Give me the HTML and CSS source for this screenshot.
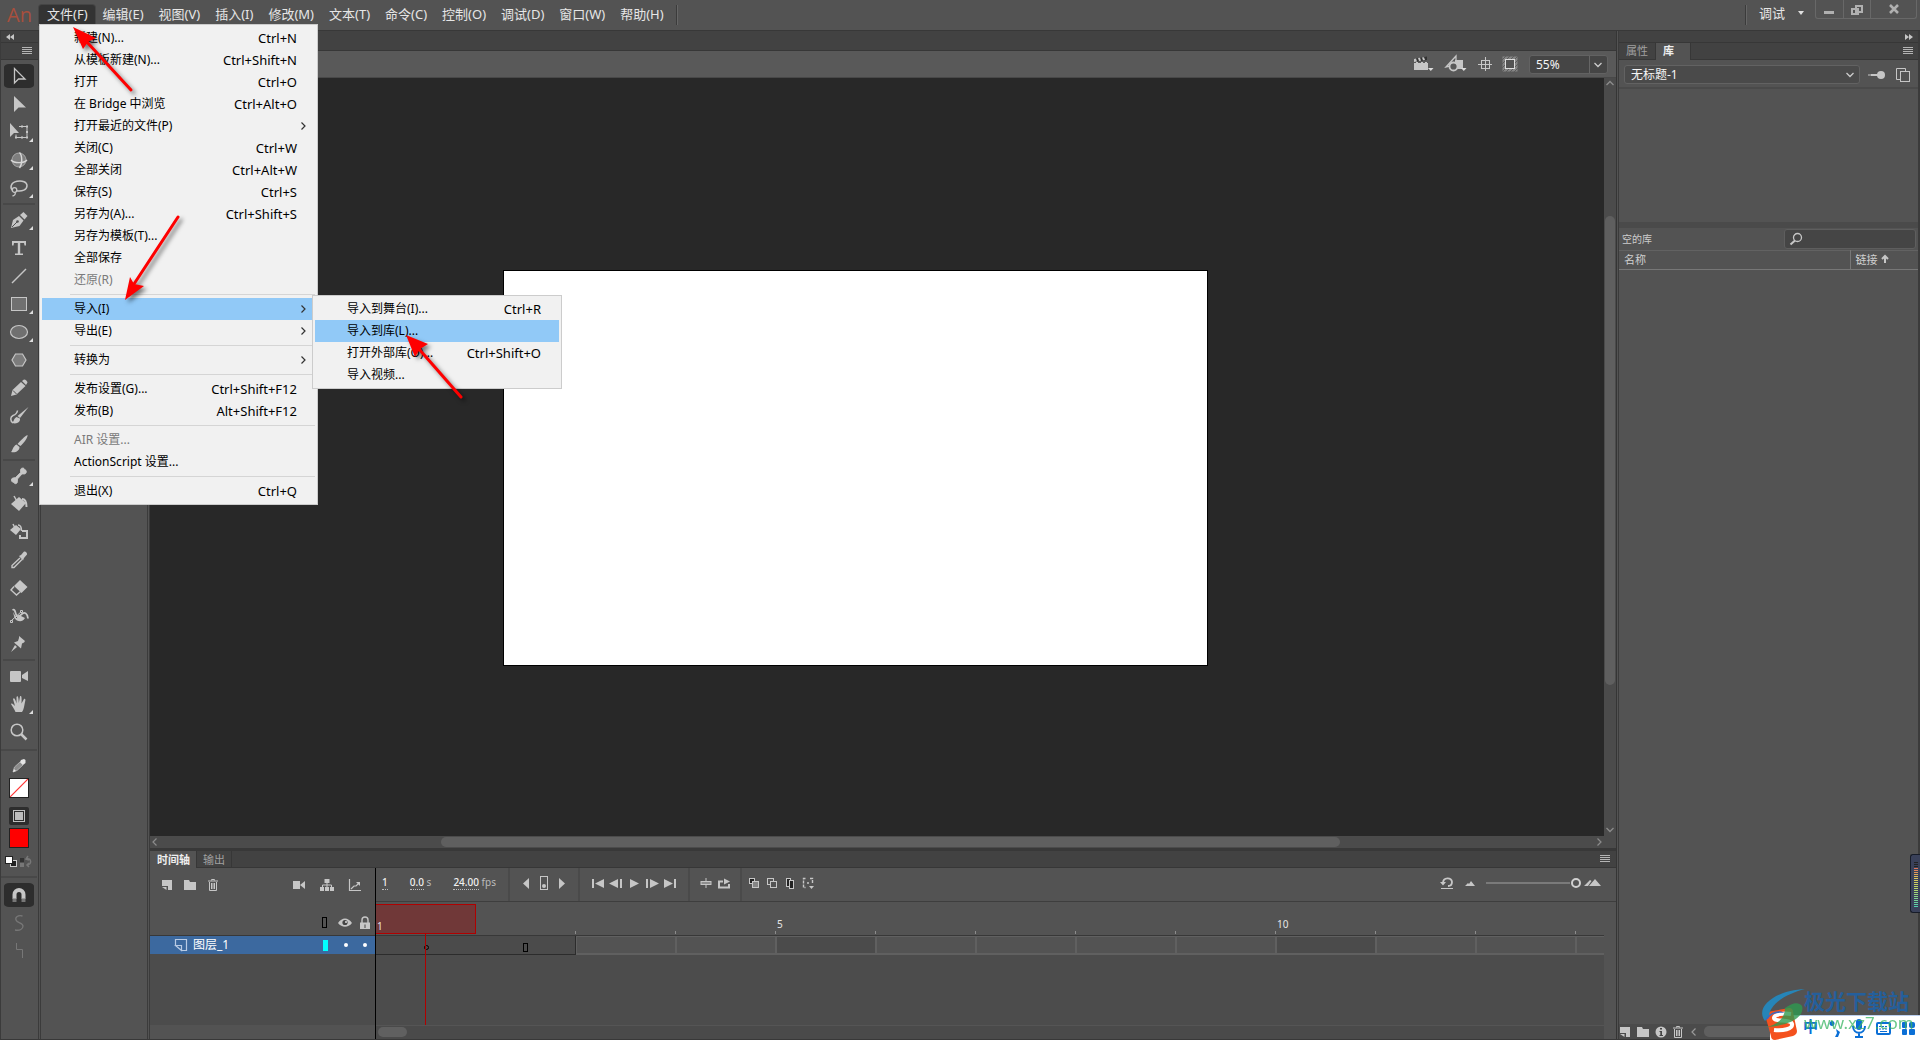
FILE: index.html
```html
<!DOCTYPE html>
<html lang="zh-CN">
<head>
<meta charset="utf-8">
<title>An</title>
<link rel="stylesheet" href="styles.css">
</head>
<body>
<svg class="sprite" aria-hidden="true">
  <symbol id="i-burger" viewBox="0 0 12 10"><path d="M1 1.5h10M1 3.5h10M1 5.500h10M1 7.500h10" stroke="#b4b4b4" fill="none"/></symbol>
  <symbol id="i-caret" viewBox="0 0 10 10"><path d="M1.500 3l3.500 3.500L8.500 3" fill="none" stroke="currentColor" stroke-width="1.300"/></symbol>
  <symbol id="i-sub" viewBox="0 0 10 10"><path d="M3.500 1.500L7 5 3.500 8.500" fill="none" stroke="currentColor" stroke-width="1.200"/></symbol>
  <symbol id="i-select" viewBox="0 0 24 24"><path d="M7.500 4.500v14.500l4-4h6.500z" fill="none" stroke="#c6c6c6" stroke-width="1.300"/></symbol>
  <symbol id="i-subselect" viewBox="0 0 24 24"><path d="M7 4v16l4.500-4.500H19z" fill="#c6c6c6"/></symbol>
  <symbol id="i-transform" viewBox="0 0 24 24"><path d="M3 3v14l4-4h5z" fill="#c6c6c6"/><path d="M12 6.500h8v11H9v-3" fill="none" stroke="#c6c6c6"/><path d="M14 5.500h2v2h-2zM19 5.500h2v2h-2zM19 11h2v2h-2zM19 16.500h2v2h-2zM14 16.500h2v2h-2zM8 16.500h2v2H8z" fill="#c6c6c6"/></symbol>
  <symbol id="i-sphere" viewBox="0 0 24 24"><circle cx="12" cy="12" r="7" fill="#7e7e7e"/><circle cx="12" cy="12" r="7" fill="none" stroke="#a8a8a8"/><path d="M4 12c3 3.500 13 3.500 16 0" fill="none" stroke="#d8d8d8" stroke-width="1.400"/><path d="M12.500 4.500c3 3 3 12 0 15.500" fill="none" stroke="#d8d8d8" stroke-width="1.400"/></symbol>
  <symbol id="i-lasso" viewBox="0 0 24 24"><path d="M6 14.500C2.500 12 3.500 6.500 10 5.200c5.500-1 10 .8 10 4.500 0 4-5 6-10.500 5" fill="none" stroke="#c6c6c6" stroke-width="1.500"/><circle cx="7.500" cy="14" r="2.300" fill="none" stroke="#c6c6c6" stroke-width="1.300"/><path d="M8 16c1 2-.5 3.500-2.500 4" fill="none" stroke="#c6c6c6" stroke-width="1.300"/></symbol>
  <symbol id="i-pen" viewBox="0 0 24 24"><path d="M4 20l2-8 6-4 4.500 4.500-4 5.500z" fill="#c6c6c6"/><path d="M5 19l5-5" stroke="#535353"/><circle cx="10.500" cy="13.500" r="1.300" fill="#535353"/><path d="M13 7l3.500-3 4 4-3 3.500z" fill="#c6c6c6"/></symbol>
  <symbol id="i-text" viewBox="0 0 24 24"><path d="M5 5h14v4.500h-1.500L17 7h-3.800v10.500h2.800V19H8v-1.500h2.800V7H7l-.5 2.500H5z" fill="#c6c6c6"/></symbol>
  <symbol id="i-line" viewBox="0 0 24 24"><path d="M5 19L19 5" stroke="#c6c6c6" stroke-width="1.500"/></symbol>
  <symbol id="i-rect" viewBox="0 0 24 24"><rect x="4.500" y="5.500" width="15" height="13" fill="#707070" stroke="#c6c6c6"/></symbol>
  <symbol id="i-ellipse" viewBox="0 0 24 24"><ellipse cx="12" cy="12" rx="8.500" ry="6.500" fill="#707070" stroke="#c6c6c6" stroke-width="1.200"/></symbol>
  <symbol id="i-hex" viewBox="0 0 24 24"><path d="M8.500 6h7l3.500 6-3.500 6h-7L5 12z" fill="#7c7c7c" stroke="#c6c6c6" stroke-width="1.200"/></symbol>
  <symbol id="i-pencil" viewBox="0 0 24 24"><path d="M4 20l1.500-6L14 6l4.500 4-9 8.500z" fill="#c6c6c6"/><path d="M6 14.500l3.500 3.500" stroke="#535353"/><path d="M15 5l2-1.500c2 0 3 1.500 3.500 3L19 9z" fill="#c6c6c6"/></symbol>
  <symbol id="i-brush2" viewBox="0 0 24 24"><path d="M6 19c-3-2-3-6 0-7.500 3-1 4-2 4.500-5" fill="none" stroke="#c6c6c6" stroke-width="1.500"/><path d="M21.500 3L13 14l-2.500-2z" fill="#c6c6c6"/><path d="M13 14.500c.5 3.500-3 6-8 4.500 2-1 1.500-4.500 4.500-6z" fill="#c6c6c6"/></symbol>
  <symbol id="i-brush" viewBox="0 0 24 24"><path d="M20.500 3c.5 2-3 7.500-7 11L10.500 12C14 8 18 4 20.500 3z" fill="#c6c6c6"/><path d="M12.500 15c0 4-4 6-8.500 5 1.500-1 1.500-5.500 5.500-7.500z" fill="#c6c6c6"/></symbol>
  <symbol id="i-bone" viewBox="0 0 24 24"><path d="M8.500 13.500l5-5V6c0-2 3.500-3 4-.5 2.500.5 2.500 4 0 4.500H15l-4.500 5v2.500c0 2.500-3 3-3.500 1-3 0-3.500-4-1-4.500z" fill="#c6c6c6" stroke="#c6c6c6" stroke-width=".8"/></symbol>
  <symbol id="i-bucket" viewBox="0 0 24 24"><path d="M4 12l8-7 7 6-7 8z" fill="#c6c6c6"/><path d="M7 4l4 7" stroke="#c6c6c6" stroke-width="1.500"/><path d="M15 7c3 0 4.500 2 4.500 8" stroke="#c6c6c6" stroke-width="2" fill="none"/></symbol>
  <symbol id="i-ink" viewBox="0 0 24 24"><path d="M3 10l6-5 5 4-5 6z" fill="#c6c6c6"/><path d="M6 4l2 4M11 5c3 0 3.500 2 3.500 6" stroke="#c6c6c6" stroke-width="1.500" fill="none"/><path d="M15 11h5v7h-7v-3" fill="none" stroke="#c6c6c6" stroke-width="2"/></symbol>
  <symbol id="i-dropper" viewBox="0 0 24 24"><path d="M13 10l-8 7.500v2h2l8-8" fill="none" stroke="#c6c6c6" stroke-width="1.400"/><path d="M12 8l2-1 3-3.500c1.500-.5 3.500 1 3 3L17 10l-1 2.500z" fill="#c6c6c6"/></symbol>
  <symbol id="i-eraser" viewBox="0 0 24 24"><path d="M13 4l7.500 7-6 6-7.500-7z" fill="#c6c6c6"/><path d="M7 10.500l-3 3.500 5.500 5 4-3.500" fill="none" stroke="#c6c6c6" stroke-width="1.400"/></symbol>
  <symbol id="i-width" viewBox="0 0 24 24"><path d="M5 16l10-9" stroke="#c6c6c6" fill="none"/><path d="M5.500 6c3-1.500 2.500 3 4 5.500 1.500 2 4-.5 6-2s5-.5 5.500 5" fill="none" stroke="#c6c6c6" stroke-width="1.800"/><path d="M6 8c1 3 1 7 4 8.500s6 1 8-2.500l-6-3-3 2z" fill="#c6c6c6"/><path d="M3.500 16.500h2v2h-2zM13.500 6.500h2v2h-2zM8.500 12.500h2v2h-2z" fill="#535353" stroke="#c6c6c6"/></symbol>
  <symbol id="i-pin" viewBox="0 0 24 24"><path d="M12 4l6 5-1 1.500-2 1-1 5-7-6 4-1.500 1-3zM8 13l2 2-6 5z" fill="#c6c6c6"/></symbol>
  <symbol id="i-cam" viewBox="0 0 24 24"><rect x="3" y="7" width="11" height="11" rx="1" fill="#c6c6c6"/><path d="M15 11l6-4v10l-6-3z" fill="#c6c6c6"/></symbol>
  <symbol id="i-hand" viewBox="0 0 24 24"><path d="M8.500 20c-1-3-3-5-4.500-8 1-1 2 0 4 2L6 7c1-1.500 2-.5 3.500 4.500L9.500 5c1-1.500 2-1 2.300 6L13 4.500c1-1 2-.5 1.500 7L17 7c1-.5 2 0 1 3-1 5-1 7-3 10z" fill="#c6c6c6"/></symbol>
  <symbol id="i-zoom" viewBox="0 0 24 24"><circle cx="10" cy="10" r="5.800" fill="none" stroke="#c6c6c6" stroke-width="1.500"/><path d="M14 14l5.500 5.500" stroke="#c6c6c6" stroke-width="2.500"/></symbol>
  <symbol id="i-magnet" viewBox="0 0 24 24"><path d="M7.500 16v-4.500c0-6 9-6 9 0V16" fill="none" stroke="#c6c6c6" stroke-width="4"/><path d="M5.500 15.500h4V19h-4zM14.500 15.500h4V19h-4z" fill="#777"/></symbol>
  <symbol id="i-smooth" viewBox="0 0 24 24"><path d="M15.500 5C11 4 8 6 9 9s7 3 7 6-3 5-8 4" fill="none" stroke="#777" stroke-width="1.300"/></symbol>
  <symbol id="i-straight" viewBox="0 0 24 24"><path d="M9.500 4v6.500h6V19" fill="none" stroke="#777"/></symbol>
  <symbol id="i-stroke" viewBox="0 0 24 24"><path d="M6 18l1.500-5L13 8l3 3-6 5.500z" fill="#8c8c8c" stroke="#bbb" stroke-width=".8"/><path d="M6 18l1-3 2 2zM14 6l3-1 1.500 1v3L16 11l-3-3z" fill="#e4e4e4"/></symbol>
  <symbol id="i-swap" viewBox="0 0 28 14"><rect x="5.500" y="5.500" width="6" height="6" fill="#222" stroke="#ccc"/><rect x=".5" y="1.500" width="7" height="7" fill="#fff" stroke="#222"/><path d="M15 3h4v4h-4z" fill="#333"/><path d="M15 8h4v4h-4z" fill="#777"/><path d="M21 4c6-2 6 6 1 6M23 1l-2 3 3 1M24 8l-2 2 2 2" fill="none" stroke="#777" stroke-width="1.500"/></symbol>
  <symbol id="i-objdraw" viewBox="0 0 20 18"><rect x="4.500" y="3.500" width="11" height="11" fill="none" stroke="#bdbdbd"/><rect x="6" y="5" width="8" height="8" fill="#bdbdbd"/></symbol>
  <symbol id="i-clapper" viewBox="0 0 24 20"><path d="M3 9h14v7H3zM20 13h-1l-.5 0z" fill="#c6c6c6"/><path d="M3 8l13-2V2.500L3 5z" fill="#333"/><path d="M3 5l2-.5 1 3-3 .5M7 4l2-.3 1 3-2 .3M11 3.500l2-.3 1 2.800-2 .3M5 8h2v1H5M10 8h2v1h-2M14 8h2v1h-2" fill="#c6c6c6"/><path d="M17 14h5.500l-2.700 3z" fill="#ddd"/></symbol>
  <symbol id="i-shapes" viewBox="0 0 24 20"><path d="M2 13L12 2v9z" fill="none" stroke="#c6c6c6" stroke-width="1.300"/><path d="M11 6h8v9h-8z" fill="#c6c6c6"/><circle cx="9.500" cy="12.500" r="4" fill="#595959" stroke="#c6c6c6" stroke-width="1.800"/><path d="M17 14h5.500l-2.700 3z" fill="#ddd"/></symbol>
  <symbol id="i-center" viewBox="0 0 16 16"><path d="M8.500 1v14M1 8.500h14" stroke="#c6c6c6"/><rect x="4.500" y="4.500" width="8" height="8" fill="none" stroke="#c6c6c6"/></symbol>
  <symbol id="i-clip" viewBox="0 0 16 16"><rect x=".5" y=".5" width="15" height="15" fill="#858585"/><path d="M0 4l4-4M0 8l8-8M0 12L12 0M0 16L16 0M4 16L16 4M8 16l8-8M12 16l4-4" stroke="#5c5c5c"/><rect x="3.500" y="3.500" width="9" height="9" fill="#535353" stroke="#ddd"/></symbol>
  <symbol id="i-newlayer" viewBox="0 0 12 12"><path d="M1 1h10v10H7V7H1z" fill="#c6c6c6"/><path d="M1 8h4.500v3z" fill="#c6c6c6"/></symbol>
  <symbol id="i-folder" viewBox="0 0 14 12"><path d="M1 1h5l1 2h6v8H1z" fill="#c6c6c6"/></symbol>
  <symbol id="i-trash" viewBox="0 0 12 14"><path d="M1 3h10M4.500 2.500v-1h3v1M2.500 4v8.500h7V4M4.500 5v6M6 5v6M7.500 5v6" fill="none" stroke="#c6c6c6"/></symbol>
  <symbol id="i-tree" viewBox="0 0 14 14"><path d="M4.500 1h5v4h-5zM0 9h4v4H0zM5 9h4v4H5zM10 9h4v4h-4z" fill="#c6c6c6"/><path d="M7 5v4M2.500 9V7h9v2" fill="none" stroke="#c6c6c6"/></symbol>
  <symbol id="i-graph" viewBox="0 0 14 14"><path d="M1.500 1v11.500H13M3 11l3-3h2l3-3" fill="none" stroke="#c6c6c6" stroke-width="1.200"/><path d="M8 4h4v4z" fill="#c6c6c6"/></symbol>
  <symbol id="i-tcam" viewBox="0 0 14 12"><path d="M1 2h7v8H1zM8 6l5-4v8z" fill="#c6c6c6"/></symbol>
  <symbol id="i-left" viewBox="0 0 14 14"><path d="M10 2v11L4 7.500z" fill="#c6c6c6"/></symbol>
  <symbol id="i-right" viewBox="0 0 14 14"><path d="M4 2v11l6-5.500z" fill="#c6c6c6"/></symbol>
  <symbol id="i-key" viewBox="0 0 14 14"><rect x="3.500" y=".5" width="7" height="13" fill="none" stroke="#c6c6c6"/><circle cx="7" cy="10" r="2" fill="#c6c6c6"/></symbol>
  <symbol id="i-first" viewBox="0 0 14 14"><path d="M1 3h2v9H1zM13 3v9L4 7.500z" fill="#c6c6c6"/></symbol>
  <symbol id="i-prev" viewBox="0 0 14 14"><path d="M11 3h2v9h-2zM9 3v9L0 7.500z" fill="#c6c6c6"/></symbol>
  <symbol id="i-play" viewBox="0 0 14 14"><path d="M3 3v9l9-4.500z" fill="#c6c6c6"/></symbol>
  <symbol id="i-next" viewBox="0 0 14 14"><path d="M1 3h2v9H1zM5 3v9l9-4.500z" fill="#c6c6c6"/></symbol>
  <symbol id="i-last" viewBox="0 0 14 14"><path d="M11 3h2v9h-2zM1 3v9l9-4.500z" fill="#c6c6c6"/></symbol>
  <symbol id="i-cframe" viewBox="0 0 14 14"><path d="M7 2v10" stroke="#c6c6c6"/><rect x="2" y="5.500" width="10" height="3" fill="#8e8e8e" stroke="#c6c6c6"/></symbol>
  <symbol id="i-loop" viewBox="0 0 14 14"><path d="M6 5.500H2v6h10V8" fill="none" stroke="#c6c6c6" stroke-width="2"/><path d="M7 2.500l6 3-6 3z" fill="#c6c6c6"/></symbol>
  <symbol id="i-onion" viewBox="0 0 14 14"><rect x="2.500" y="2.500" width="5" height="5" fill="#222" stroke="#c6c6c6"/><rect x="5.500" y="5.500" width="6" height="6" fill="#858585" stroke="#c6c6c6"/></symbol>
  <symbol id="i-onion2" viewBox="0 0 14 14"><rect x="2.500" y="2.500" width="6" height="6" fill="none" stroke="#c6c6c6"/><rect x="5.500" y="5.500" width="6" height="6" fill="#535353" stroke="#c6c6c6"/></symbol>
  <symbol id="i-multi" viewBox="0 0 14 14"><rect x="3.500" y="2.500" width="4" height="8" fill="#222" stroke="#c6c6c6"/><rect x="6.500" y="4.500" width="4" height="8" fill="#222" stroke="#c6c6c6"/></symbol>
  <symbol id="i-marks" viewBox="0 0 14 14"><path d="M4.500 2.500h-2v9h2M9 2.500h2.500V8M6 7h2" fill="none" stroke="#c6c6c6" stroke-width="1.400" stroke-dasharray="3 1"/><path d="M8 10h5l-2.500 3z" fill="#c6c6c6"/></symbol>
  <symbol id="i-undo" viewBox="0 0 14 14"><path d="M3 7c0-6 9-6 9-1 0 3-2 4-4 4" fill="none" stroke="#c6c6c6" stroke-width="1.800"/><path d="M0 6h6L3 9.500zM1 12h12v1H1z" fill="#c6c6c6"/></symbol>
  <symbol id="i-mtn" viewBox="0 0 18 10"><path d="M4 8l3-3 1 1 2-3 4 5z" fill="#c6c6c6"/></symbol>
  <symbol id="i-mtns" viewBox="0 0 18 10"><path d="M0 8l6-6 1.500 1L4 8zM5 8l6-7 6 7z" fill="#c6c6c6"/></symbol>
  <symbol id="i-eye" viewBox="0 0 14 12"><path d="M0 6c4-6 10-6 14 0-4 5-10 5-14 0z" fill="#c6c6c6"/><circle cx="7" cy="5.500" r="2.600" fill="#444"/><circle cx="8" cy="5" r="1" fill="#ddd"/></symbol>
  <symbol id="i-lock" viewBox="0 0 12 14"><path d="M3 7V4c0-4 6-4 6 0v3" fill="none" stroke="#c6c6c6" stroke-width="1.400"/><path d="M1 6.500h10V13H1z" fill="#c6c6c6"/><path d="M5.500 8.500h1V12h-1z" fill="#444"/></symbol>
  <symbol id="i-layer" viewBox="0 0 14 14"><path d="M1.500 7.500v-6h11v11H8M1.500 7.500H7.500v5zM1.500 7.500l6 5" fill="none" stroke="#b9cbe4" stroke-width="1.200"/></symbol>
  <symbol id="i-pinned" viewBox="0 0 18 10"><path d="M0 4.500h9v1H0zM3 4h7v2H3z" fill="#c6c6c6"/><circle cx="13" cy="5" r="4" fill="#c6c6c6"/></symbol>
  <symbol id="i-copy" viewBox="0 0 16 16"><path d="M5 12.500H1.500v-11h9V4" fill="none" stroke="#c6c6c6"/><rect x="5.500" y="4.500" width="9" height="10" fill="none" stroke="#c6c6c6"/></symbol>
  <symbol id="i-search" viewBox="0 0 14 14"><circle cx="8.500" cy="5.500" r="4" fill="none" stroke="#c6c6c6" stroke-width="1.300"/><path d="M6 8.500l-4.500 4" stroke="#c6c6c6" stroke-width="2"/></symbol>
  <symbol id="i-info" viewBox="0 0 12 12"><circle cx="6" cy="6" r="5.500" fill="#c6c6c6"/><path d="M5 2h2v1.500H5zM4.500 5H7v4h1v1H4.500V9h.8V6h-.8z" fill="#444"/></symbol>
  <symbol id="i-up" viewBox="0 0 10 10"><path d="M5 9V2M2 5l3-3 3 3" fill="none" stroke="#c6c6c6" stroke-width="2"/></symbol>
</svg>

<div class="app">
  <header class="menubar">
    <span class="logo">An</span>
    <nav class="menus">
      <button class="menu-btn is-open">文件(F)</button>
      <button class="menu-btn">编辑(E)</button>
      <button class="menu-btn">视图(V)</button>
      <button class="menu-btn">插入(I)</button>
      <button class="menu-btn">修改(M)</button>
      <button class="menu-btn">文本(T)</button>
      <button class="menu-btn">命令(C)</button>
      <button class="menu-btn">控制(O)</button>
      <button class="menu-btn">调试(D)</button>
      <button class="menu-btn">窗口(W)</button>
      <button class="menu-btn">帮助(H)</button>
    </nav>
    <span class="bar-rule"></span>
    <span class="grow"></span>
    <span class="bar-rule"></span>
    <button class="workspace">调试 <svg width="8" height="6" viewBox="0 0 8 6"><path d="M1 1h6L4 5z" fill="#e0e0e0"/></svg></button>
    <div class="win">
      <button aria-label="最小化"><svg width="27" height="18" viewBox="0 0 27 18"><path d="M8 11h10v3H8z" fill="#b0b0b0"/></svg></button>
      <button aria-label="还原"><svg width="26" height="18" viewBox="0 0 26 18"><path d="M12 6h6v6h-6zM8 9h6v5H8z" fill="#535353" stroke="#b0b0b0" stroke-width="2"/></svg></button>
      <button class="close" aria-label="关闭"><svg width="45" height="18" viewBox="0 0 45 18"><path d="M19 5l8 8M27 5l-8 8" stroke="#b0b0b0" stroke-width="2.500"/></svg></button>
    </div>
  </header>

  <div class="work">
    <aside class="tools">
      <div class="strip"><svg width="8" height="6" viewBox="0 0 8 6"><path d="M4 0v6L0 3zM8 0v6L4 3z" fill="#c6c6c6"/></svg></div>
      <div class="strip tall"><svg width="12" height="10"><use href="#i-burger"/></svg></div>
      <div class="tool-list">
        <button class="tool active"><svg><use href="#i-select"/></svg></button>
        <button class="tool"><svg><use href="#i-subselect"/></svg></button>
        <button class="tool more"><svg><use href="#i-transform"/></svg></button>
        <button class="tool more"><svg><use href="#i-sphere"/></svg></button>
        <button class="tool more"><svg><use href="#i-lasso"/></svg></button>
        <hr>
        <button class="tool more"><svg><use href="#i-pen"/></svg></button>
        <button class="tool"><svg><use href="#i-text"/></svg></button>
        <button class="tool"><svg><use href="#i-line"/></svg></button>
        <button class="tool more"><svg><use href="#i-rect"/></svg></button>
        <button class="tool more"><svg><use href="#i-ellipse"/></svg></button>
        <button class="tool"><svg><use href="#i-hex"/></svg></button>
        <button class="tool"><svg><use href="#i-pencil"/></svg></button>
        <button class="tool"><svg><use href="#i-brush2"/></svg></button>
        <button class="tool"><svg><use href="#i-brush"/></svg></button>
        <hr>
        <button class="tool more"><svg><use href="#i-bone"/></svg></button>
        <button class="tool"><svg><use href="#i-bucket"/></svg></button>
        <button class="tool"><svg><use href="#i-ink"/></svg></button>
        <button class="tool"><svg><use href="#i-dropper"/></svg></button>
        <button class="tool"><svg><use href="#i-eraser"/></svg></button>
        <button class="tool"><svg><use href="#i-width"/></svg></button>
        <button class="tool"><svg><use href="#i-pin"/></svg></button>
        <hr>
        <button class="tool"><svg><use href="#i-cam"/></svg></button>
        <button class="tool more"><svg><use href="#i-hand"/></svg></button>
        <button class="tool"><svg><use href="#i-zoom"/></svg></button>
        <hr class="wide">
        <div class="colors">
          <svg width="24" height="24"><use href="#i-stroke"/></svg>
          <button class="swatch none" aria-label="笔触颜色"><svg width="18" height="18" viewBox="0 0 18 18"><path d="M0 18L18 0" stroke="#f33" stroke-width="1.200"/></svg></button>
          <button class="objdraw" aria-label="对象绘制"><svg width="20" height="18"><use href="#i-objdraw"/></svg></button>
          <button class="swatch fill" aria-label="填充颜色"></button>
          <svg class="swap" width="28" height="14"><use href="#i-swap"/></svg>
        </div>
        <hr class="wide">
        <button class="tool active"><svg><use href="#i-magnet"/></svg></button>
        <button class="tool"><svg><use href="#i-smooth"/></svg></button>
        <button class="tool"><svg><use href="#i-straight"/></svg></button>
      </div>
    </aside>
    <aside class="dock"></aside>

    <main class="center">
      <div class="doc-tabs"></div>
      <div class="edit-bar">
        <svg width="24" height="20"><use href="#i-clapper"/></svg>
        <svg width="24" height="20"><use href="#i-shapes"/></svg>
        <svg width="16" height="16"><use href="#i-center"/></svg>
        <svg width="16" height="16"><use href="#i-clip"/></svg>
        <div class="combo zoom"><select aria-label="缩放"><option>55%</option></select><svg width="10" height="10"><use href="#i-caret"/></svg></div>
      </div>
      <div class="canvas-row">
        <div class="canvas"><div class="stage"></div></div>
        <div class="vscroll">
          <svg class="flip" width="10" height="10"><use href="#i-caret"/></svg>
          <div class="vtrack"><span class="vthumb"></span></div>
          <svg width="10" height="10"><use href="#i-caret"/></svg>
        </div>
      </div>
      <div class="hscroll">
        <svg class="mirror" width="10" height="10"><use href="#i-sub"/></svg>
        <div class="htrack"><span class="hthumb"></span></div>
        <svg width="10" height="10"><use href="#i-sub"/></svg>
      </div>

      <section class="timeline">
        <div class="tabs">
          <button class="tab on">时间轴</button><button class="tab">输出</button>
          <span class="grow"></span><svg width="12" height="10"><use href="#i-burger"/></svg>
        </div>
        <div class="tl-body">
          <div class="layers">
            <div class="layer-tools">
              <svg width="12" height="12"><use href="#i-newlayer"/></svg>
              <svg width="14" height="12"><use href="#i-folder"/></svg>
              <svg width="12" height="14"><use href="#i-trash"/></svg>
              <span class="grow"></span>
              <svg width="14" height="12"><use href="#i-tcam"/></svg>
              <svg width="14" height="14"><use href="#i-tree"/></svg>
              <svg width="14" height="14"><use href="#i-graph"/></svg>
            </div>
            <div class="layer-head"><i class="outline"></i><svg width="14" height="12"><use href="#i-eye"/></svg><svg width="12" height="14"><use href="#i-lock"/></svg></div>
            <div class="layer"><svg width="14" height="14"><use href="#i-layer"/></svg><span>图层_1</span><span class="grow"></span><i class="chip"></i><i class="dot"></i><i class="dot"></i></div>
            <div class="layer-rest"></div>
            <div class="layer-foot"></div>
          </div>
          <div class="frames">
            <div class="play-bar">
              <div class="grp stats"><b>1</b><span><b>0.0</b> s</span><span><b>24.00</b> fps</span></div>
              <div class="grp"><svg><use href="#i-left"/></svg><svg><use href="#i-key"/></svg><svg><use href="#i-right"/></svg></div>
              <div class="grp transport"><svg><use href="#i-first"/></svg><svg><use href="#i-prev"/></svg><svg><use href="#i-play"/></svg><svg><use href="#i-next"/></svg><svg><use href="#i-last"/></svg></div>
              <div class="grp"><svg><use href="#i-cframe"/></svg><svg><use href="#i-loop"/></svg></div>
              <div class="grp last"><svg><use href="#i-onion"/></svg><svg><use href="#i-onion2"/></svg><svg><use href="#i-multi"/></svg><svg><use href="#i-marks"/></svg></div>
              <span class="grow"></span>
              <div class="sizer"><svg><use href="#i-undo"/></svg><svg class="m"><use href="#i-mtn"/></svg><input type="range" value="100" aria-label="帧大小"><svg class="m"><use href="#i-mtns"/></svg></div>
            </div>
            <div class="frame-area">
              <div class="ruler"><span></span><span></span><span></span><span></span><span>5</span><span></span><span></span><span></span><span></span><span>10</span><span></span><span></span><span></span></div>
              <div class="row"><span class="used"><i class="ring"></i></span><span class="used end"><i class="endmark"></i></span><span></span><span></span><span class="fifth"></span><span></span><span></span><span></span><span></span><span class="fifth"></span><span></span><span></span><span></span></div>
              <div class="frames-rest"></div>
              <div class="frames-scroll"><span></span></div>
              <div class="playhead">1</div>
              <div class="playline"></div>
            </div>
          </div>
        </div>
      </section>
    </main>

    <aside class="library">
      <div class="strip right"><svg width="8" height="6" viewBox="0 0 8 6"><path d="M0 0l4 3-4 3zM4 0l4 3-4 3z" fill="#c6c6c6"/></svg></div>
      <div class="tabs"><button class="tab">属性</button><button class="tab on">库</button><span class="grow"></span><svg width="12" height="10"><use href="#i-burger"/></svg></div>
      <div class="lib-doc">
        <div class="combo"><select aria-label="文档"><option>无标题-1</option></select><svg width="10" height="10"><use href="#i-caret"/></svg></div>
        <svg width="18" height="10"><use href="#i-pinned"/></svg>
        <svg width="16" height="16"><use href="#i-copy"/></svg>
      </div>
      <div class="preview"></div>
      <div class="lib-search"><label for="q">空的库</label><span class="field"><svg width="14" height="14"><use href="#i-search"/></svg><input id="q" type="text"></span></div>
      <table class="lib-table"><thead><tr><th>名称</th><th class="link">链接 <svg width="10" height="10"><use href="#i-up"/></svg></th></tr></thead></table>
      <div class="lib-space"></div>
      <div class="lib-foot">
        <svg width="12" height="12"><use href="#i-newlayer"/></svg>
        <svg width="14" height="12"><use href="#i-folder"/></svg>
        <svg width="12" height="12"><use href="#i-info"/></svg>
        <svg width="12" height="14"><use href="#i-trash"/></svg>
        <svg class="mirror" width="10" height="10"><use href="#i-sub"/></svg>
        <span class="foot-thumb"></span>
      </div>
    </aside>
  </div>

  <ul class="popup file-menu">
    <li><span>新建(N)...</span><kbd>Ctrl+N</kbd></li>
    <li><span>从模板新建(N)...</span><kbd>Ctrl+Shift+N</kbd></li>
    <li><span>打开</span><kbd>Ctrl+O</kbd></li>
    <li><span>在 Bridge 中浏览</span><kbd>Ctrl+Alt+O</kbd></li>
    <li><span>打开最近的文件(P)</span><svg><use href="#i-sub"/></svg></li>
    <li><span>关闭(C)</span><kbd>Ctrl+W</kbd></li>
    <li><span>全部关闭</span><kbd>Ctrl+Alt+W</kbd></li>
    <li><span>保存(S)</span><kbd>Ctrl+S</kbd></li>
    <li><span>另存为(A)...</span><kbd>Ctrl+Shift+S</kbd></li>
    <li><span>另存为模板(T)...</span></li>
    <li><span>全部保存</span></li>
    <li class="off"><span>还原(R)</span></li>
    <li class="sep"></li>
    <li class="hot"><span>导入(I)</span><svg><use href="#i-sub"/></svg></li>
    <li><span>导出(E)</span><svg><use href="#i-sub"/></svg></li>
    <li class="sep"></li>
    <li><span>转换为</span><svg><use href="#i-sub"/></svg></li>
    <li class="sep"></li>
    <li><span>发布设置(G)...</span><kbd>Ctrl+Shift+F12</kbd></li>
    <li><span>发布(B)</span><kbd>Alt+Shift+F12</kbd></li>
    <li class="sep"></li>
    <li class="off"><span>AIR 设置...</span></li>
    <li><span>ActionScript 设置...</span></li>
    <li class="sep"></li>
    <li><span>退出(X)</span><kbd>Ctrl+Q</kbd></li>
  </ul>
  <ul class="popup import-menu">
    <li><span>导入到舞台(I)...</span><kbd>Ctrl+R</kbd></li>
    <li class="hot"><span>导入到库(L)...</span></li>
    <li><span>打开外部库(O)...</span><kbd>Ctrl+Shift+O</kbd></li>
    <li><span>导入视频...</span></li>
  </ul>

  <svg class="arrows" width="480" height="410" viewBox="0 0 480 410">
    <g fill="#fe0000" stroke="#fe0000">
      <path d="M86 41L131 90" stroke-width="3" stroke-linecap="round"/><path d="M73 27l23 11-8 4-5 7z" stroke="none"/>
      <path d="M134 284L178 217" stroke-width="3" stroke-linecap="round"/><path d="M125 300l5-23 4 7 10 2z" stroke="none"/>
      <path d="M419 349L461 397" stroke-width="3" stroke-linecap="round"/><path d="M406 335l22 9-8 5-5 8z" stroke="none"/>
    </g>
  </svg>

  <div class="meter"><span></span></div>

  <div class="ime">
    <svg width="150" height="25" viewBox="0 0 150 25" fill="#0b6fd6">
      <path d="M66 13l4 3-2 5-3 0 2-4zM62 5a2.500 2.500 0 1 0 .1 0z"/>
      <rect x="86" y="3" width="6" height="11" rx="3"/><path d="M83 10c0 9 12 9 12 0M89 17v4M85 21h8" fill="none" stroke="#0b6fd6" stroke-width="2"/>
      <rect x="107" y="7" width="13" height="11" rx="1" fill="none" stroke="#0b6fd6" stroke-width="2"/><path d="M109 10.500h9M109 13h9" stroke="#0b6fd6" stroke-dasharray="2 1"/><path d="M110 15.500h7" stroke="#0b6fd6"/>
      <rect x="132" y="6" width="5" height="6" rx="1"/><rect x="139" y="6" width="6" height="6" rx="2"/><rect x="132" y="13" width="5" height="6" rx="1"/><rect x="139" y="13" width="6" height="6" rx="1"/>
    </svg>
    <span class="zh">中</span>
  </div>
  <div class="watermark">
    <svg width="48" height="52" viewBox="0 0 48 52">
      <path d="M7 24l22-4c3 0 4 2 4 4l4 19c0 3-2 4-4 5l-18 4c-3 0-4-2-4-4L5 27z" fill="#f4511e"/>
      <path d="M31 26c-7-1-17 0-17 4s17 1 18 6-9 7-18 6" fill="none" stroke="#fff" stroke-width="4"/>
      <path d="M5 33C-6 19 16 2 45 1 26 6 9 16 9 29z" fill="#2685b8"/>
      <path d="M5 39c12-1 20-9 20-19 8-6 14-6 17-2 3 9-9 20-37 21z" fill="#2e9a50" opacity=".8"/>
      <path d="M5 32c5-8 13-11 20-7-6-1-14 0-17 6z" fill="#3c69c0"/>
    </svg>
    <div class="wm-text"><strong>极光下载站</strong><em>www.xz7.com</em></div>
  </div>
</div>
</body>
</html>
```
FILE: styles.css
```css
* { box-sizing: border-box; }
body { margin: 0; background: #535353; color: #e6e6e6; font: 12px/16px "Noto Sans", "Noto Sans CJK SC", sans-serif; }
button, select, input { font: inherit; color: inherit; margin: 0; padding: 0; border: 0; background: none; }
svg { display: block; flex: none; }
.sprite { position: absolute; width: 0; height: 0; }
.grow { flex: 1; }
.flip { transform: rotate(180deg); }
.mirror { transform: rotate(180deg); }

.app { position: relative; height: 100vh; display: flex; flex-direction: column; overflow: hidden; }

/* menu bar */
.menubar { height: 31px; display: flex; align-items: center; background: #535353; border-bottom: 1px solid #383838; padding-right: 3px; flex: none; }
.logo { width: 39px; padding-left: 7px; font: 20px/28px "Open Sans", sans-serif; color: #a84f3d; }
.menus { display: flex; font-size: 13px; line-height: 18px; }
.menu-btn { height: 20px; padding: 0 7px 2px 8px; border-radius: 3px 3px 0 0; white-space: nowrap; }
.menu-btn.is-open { background: #333; box-shadow: 0 0 0 1px #454545; }
.bar-rule { width: 2px; height: 20px; background: #3b3b3b; border-right: 1px solid #666; margin-left: 5px; }
.workspace { display: flex; align-items: center; gap: 12px; font-size: 13px; padding: 0 10px 4px 12px; }
.win { display: flex; align-self: flex-start; border: 1px solid #686868; border-top: 0; border-radius: 0 0 3px 3px; height: 19px; }
.win button + button { border-left: 1px solid #686868; }

.work { flex: 1; display: flex; min-height: 0; border-left: 1px solid #3b3b3b; border-bottom: 1px solid #383838; }

/* tools */
.tools { width: 38px; border-right: 1px solid #3b3b3b; flex: none; }
.strip { height: 12px; background: #424242; border-bottom: 1px solid #373737; display: flex; align-items: center; padding-left: 5px; }
.strip.tall { height: 17px; padding-left: 20px; }
.strip.right { justify-content: flex-end; padding-right: 5px; }
.tool-list { display: flex; flex-direction: column; align-items: center; padding: 2px 1px 0 0; }
.tool { position: relative; width: 30px; height: 28px; padding: 2px 3px; }
.tool svg { width: 24px; height: 24px; }
.tool.active { padding: 2px 0; border-radius: 5px; background: #2d2d2d content-box; }
.tool.active svg { margin: 0 3px; }
.tool.more::after { content: ""; position: absolute; right: 1px; bottom: 4px; border: 2px solid; border-color: transparent #ddd #ddd transparent; }
.tool-list hr { width: 32px; height: 2px; margin: 1px 0; border: 0; background: #484848; }
.tool-list hr.wide { width: 36px; margin: 3px 0; }
.colors { display: flex; flex-direction: column; align-items: center; height: 119px; }
.swatch { width: 20px; height: 20px; border: 1px solid #222; flex: none; }
.swatch.none { background: #fff; margin-bottom: 9px; }
.swatch.fill { background: #f00; margin-top: 3px; }
.objdraw { width: 20px; height: 18px; background: #2d2d2d; border-radius: 2px; flex: none; }
.swap { margin-top: 7px; }

.dock { width: 110px; margin-left: 1px; background: #535353; border-left: 1px solid #3b3b3b; border-right: 3px double #3b3b3b; flex: none; }

/* centre column */
.center { flex: 1; min-width: 0; display: flex; flex-direction: column; border-right: 1px solid #353535; }
.doc-tabs { height: 20px; background: #424242; border-bottom: 1px solid #373737; flex: none; }
.edit-bar { height: 27px; background: #595959; border-bottom: 1px solid #484848; display: flex; align-items: center; justify-content: flex-end; gap: 9px; padding-right: 8px; flex: none; }
.combo { position: relative; height: 19px; border: 1px solid #626262; border-radius: 3px; background: #454545; }
.combo select { appearance: none; width: 100%; height: 17px; line-height: 17px; padding: 0 6px; display: block; color: #f5f5f5; }
.combo svg { position: absolute; right: 4px; top: 4px; color: #ccc; }
.combo.zoom { width: 79px; margin-left: 2px; }
.combo.zoom::after { content: ""; position: absolute; right: 17px; top: 0; height: 17px; border-left: 1px solid #666; }
.canvas-row { flex: 1; min-height: 0; display: flex; }
.canvas { position: relative; flex: 1; background: #282828; overflow: hidden; }
.stage { position: absolute; left: 353px; top: 192px; width: 705px; height: 396px; background: #fff; border: 1px solid #000; }
.vscroll { width: 12px; background: #4b4b4b; display: flex; flex-direction: column; align-items: center; color: #8c8c8c; padding-bottom: 1px; }
.vtrack { flex: 1; width: 10px; padding-top: 128px; }
.vthumb { display: block; height: 77%; border-radius: 5px; background: #5f5f5f; }
.hscroll { height: 12px; background: #4b4b4b; display: flex; align-items: center; flex: none; color: #8c8c8c; padding-right: 12px; }
.htrack { flex: 1; padding-left: 281px; }
.hthumb { display: block; height: 10px; width: 78%; border-radius: 5px; background: #5f5f5f; }

/* timeline */
.timeline { height: 191px; border-top: 3px solid #383838; display: flex; flex-direction: column; flex: none; }
.tabs { height: 17px; background: #424242; border-bottom: 1px solid #373737; display: flex; align-items: center; padding-right: 5px; flex: none; }
.tab { height: 17px; font-size: 11px; line-height: 16px; padding: 0 7px; color: #a0a0a0; border-right: 1px solid #373737; }
.tab.on { background: #535353; color: #eee; font-weight: bold; }
.timeline .tab { line-height: 15px; padding: 0 6px; }
.timeline .tab.on { padding-left: 7px; }
.tl-body { flex: 1; display: flex; min-height: 0; }
.layers { width: 226px; border-right: 1px solid #000; display: flex; flex-direction: column; flex: none; }
.layer-tools { height: 34px; display: flex; align-items: center; gap: 10px; padding: 0 13px 0 11px; }
.layer-tools svg:nth-last-child(-n+2) { margin-left: 4px; }
.layer-head { height: 34px; display: flex; align-items: center; justify-content: flex-end; gap: 7px; padding: 8px 4px 0 0; border-bottom: 1px solid #383838; }
.outline { width: 5px; height: 11px; border: 1px solid #000; margin-right: 4px; }
.layer { height: 18px; display: flex; align-items: center; background: #3c699f; padding: 0 8px 0 24px; gap: 5px; color: #fff; }
.chip { width: 5px; height: 11px; background: #0ff; margin-right: 11px; }
.dot { width: 4px; height: 4px; border-radius: 50%; background: #fff; }
.dot + .dot { margin-left: 10px; }
.layer-rest { flex: 1; background: #4c4c4c; }
.layer-foot { height: 14px; }
.frames { flex: 1; min-width: 0; display: flex; flex-direction: column; }
.play-bar { height: 34px; border-bottom: 1px solid #3e3e3e; display: flex; align-items: center; flex: none; }
.grp { display: flex; align-items: center; gap: 4px; height: 33px; padding: 0 9px 4px; border-right: 2px solid #4a4a4a; }
.grp.transport { padding: 0 11px 4px; }
.grp.last { border: 0; padding-left: 5px; }
.grp svg, .sizer svg { width: 14px; height: 14px; }
.grp.stats { width: 134px; padding: 0 12px 4px 6px; gap: 0; font-size: 10px; line-height: 13px; justify-content: space-between; color: #bbb; }
.stats b { color: #f0f0f0; border-bottom: 1px dotted #bbb; font-weight: 500; }
.sizer { display: flex; align-items: center; gap: 7px; padding: 0 14px 4px 0; }
.sizer svg.m { width: 18px; height: 10px; }
.sizer input { appearance: none; width: 95px; height: 12px; background: linear-gradient(#7a7a7a, #7a7a7a) 0 5px / 84px 2px no-repeat; margin-right: -4px; }
.sizer input::-webkit-slider-thumb { appearance: none; width: 10px; height: 10px; border: 2px solid #d0d0d0; border-radius: 50%; }
.frame-area { position: relative; flex: 1; margin-right: 12px; display: flex; flex-direction: column; overflow: hidden; }
.ruler { height: 34px; display: flex; border-bottom: 1px solid #383838; overflow: hidden; flex: none; }
.ruler span { flex: 0 0 100px; font-size: 10px; line-height: 14px; padding: 15px 0 0 1px; background: linear-gradient(#8c8c8c, #8c8c8c) 99px 29px / 1px 3px no-repeat; }
.row { height: 19px; display: flex; overflow: hidden; background: #535353; flex: none; }
.row span { flex: 0 0 100px; border: 1px solid #606060; border-bottom-width: 2px; display: flex; align-items: center; justify-content: center; }
.row .fifth { background: #4b4b4b; }
.row .used { background: #4b4b4b; border-width: 0 0 1px; border-color: #2c2c2c; }
.row .used.end { border-right-width: 1px; }
.ring { width: 5px; height: 5px; border: 1px solid #000; border-radius: 50%; margin-top: 4px; }
.endmark { width: 5px; height: 9px; border: 1px solid #000; margin-top: 4px; }
.frames-rest { flex: 1; background: #4c4c4c; border-bottom: 1px solid #555; }
.frames-scroll { height: 13px; background: #4a4a4a; padding: 1px 2px; }
.frames-scroll span { display: block; width: 29px; height: 10px; border-radius: 5px; background: #606060; }
.playhead { position: absolute; left: 0; top: 2px; width: 100px; height: 30px; border: 1px solid #b00000; border-left: 0; background: #703838; font-size: 10px; line-height: 14px; padding: 14px 0 0 1px; }
.playline { position: absolute; left: 49px; top: 32px; bottom: 14px; width: 1px; background: #b00000; }

/* library */
.library { width: 302px; margin-left: 1px; border: solid #3b3b3b; border-width: 0 2px 0 1px; display: flex; flex-direction: column; flex: none; }
.library .tabs { padding-right: 4px; }
.library .tab { padding: 0 7px; }
.library .tab.on { padding-right: 16px; }
.lib-doc { height: 29px; display: flex; align-items: center; gap: 7px; padding: 2px 7px 0 5px; border-bottom: 2px solid #4a4a4a; }
.lib-doc .combo { flex: 1; background: #4a4a4a; margin-right: 1px; }
.lib-doc svg + svg { margin-left: 2px; }
.preview { height: 139px; border-bottom: 6px solid #4a4a4a; }
.lib-search { height: 22px; display: flex; align-items: center; justify-content: space-between; padding: 0 2px 0 3px; font-size: 10px; color: #ccc; }
.field { width: 132px; height: 20px; border: 1px solid #5e5e5e; border-radius: 3px; background: #454545; display: flex; align-items: center; padding-left: 4px; }
.field input { width: 100px; }
.lib-table { width: 100%; border-collapse: collapse; border-top: 1px solid #626262; border-bottom: 1px solid #777; height: 20px; font-size: 11px; line-height: 16px; color: #d0d0d0; }
.lib-table th { font-weight: normal; text-align: left; padding: 0 5px; }
.lib-table .link { width: 68px; border-left: 1px solid #777; }
.lib-table svg { display: inline-block; }
.lib-space { flex: 1; }
.lib-foot { height: 15px; display: flex; align-items: center; gap: 5px; background: #4b4b4b; color: #999; }
.foot-thumb { flex: 1; height: 11px; background: #5f5f5f; border-radius: 5px; }

/* popups */
.popup { position: absolute; margin: 0; padding: 2px; list-style: none; background: #f1f1f1; border: 1px solid #ccc; color: #000; }
.popup li { height: 22px; display: flex; align-items: center; justify-content: space-between; padding: 0 18px 0 32px; white-space: nowrap; }
.popup li.sep { height: 1px; margin: 3px 0 3px 28px; padding: 0; background: #d5d5d5; }
.popup li.hot { background: #91c9f7; }
.popup li.off { color: #7a7a7a; }
.popup li svg { width: 10px; height: 10px; margin-right: -11px; color: #333; }
.popup kbd { font: inherit; font-size: 13px; }
.file-menu { left: 39px; top: 24px; width: 279px; }
.import-menu { left: 312px; top: 295px; width: 250px; }
.arrows { position: absolute; left: 0; top: 0; filter: drop-shadow(3px 3px 2px rgba(0, 0, 0, .5)); pointer-events: none; }

/* floating desktop widgets */
.meter { position: absolute; right: 0; top: 854px; width: 10px; height: 59px; border: 1px solid #171c28; border-right: 0; border-radius: 3px 0 0 3px; background: #3a415a; padding: 7px 2px 6px 3px; }
.meter span { display: block; height: 45px; background: repeating-linear-gradient(transparent 0 1px, #3a415a 1px 2px), linear-gradient(#222 0 12%, #e0745a 14%, #e0c85a 35%, #b8d86a 60%, #50d0b0 100%); }
.ime { position: absolute; right: 0; bottom: 0; width: 150px; height: 25px; background: #fff; border-top: 1px solid #bcd0f0; }
.ime .zh { position: absolute; left: 33px; top: 1px; font: bold 15px/18px "Noto Sans CJK SC", sans-serif; color: #0b6fd6; }
.watermark { position: absolute; right: 9px; bottom: 0; display: flex; width: 151px; }
.watermark svg { margin-right: -4px; }
.wm-text { display: flex; flex-direction: column; }
.wm-text strong { font: bold 21px/24px "Noto Sans CJK SC", sans-serif; color: #255f9b; }
.wm-text em { font: 17px/22px "Noto Sans", sans-serif; color: #38b563; opacity: .75; }
```
